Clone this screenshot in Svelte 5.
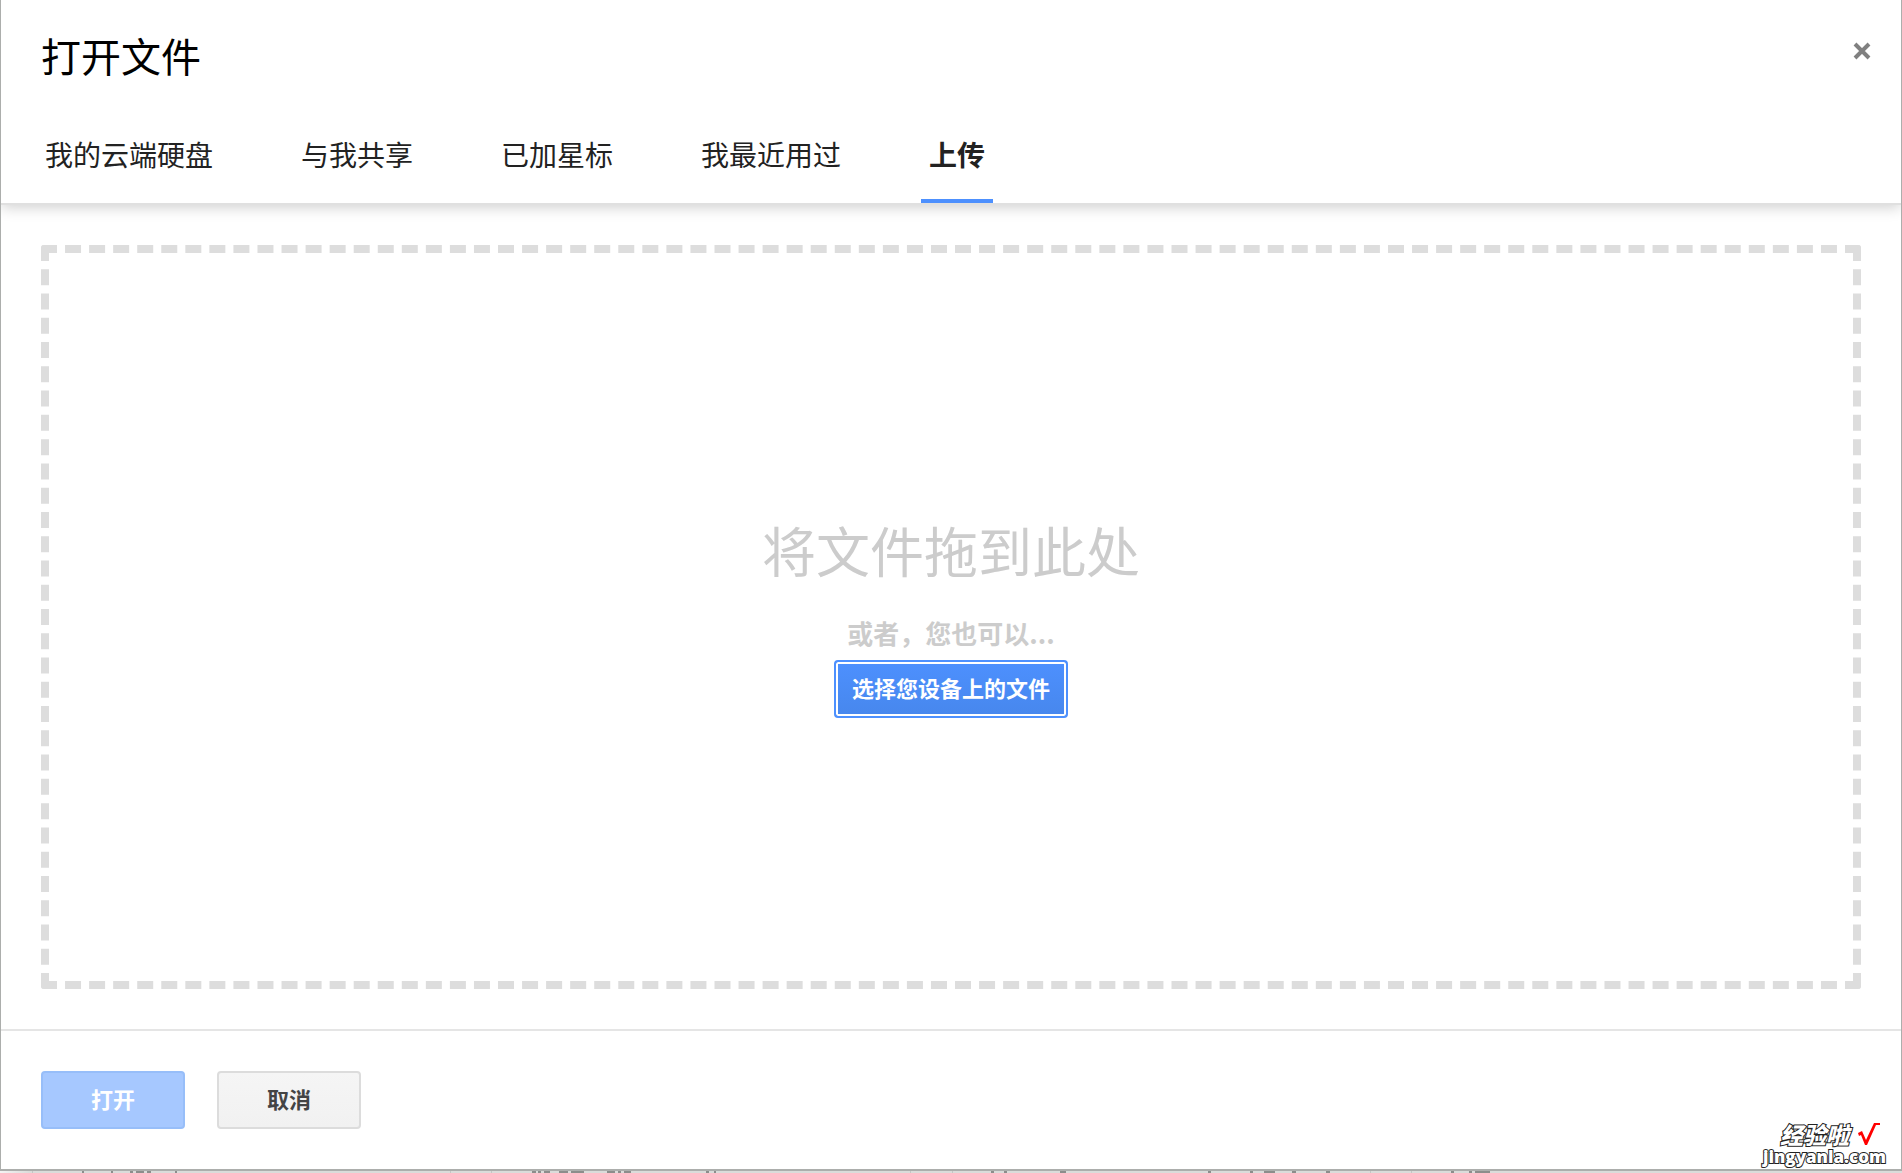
<script lang="ts">
  const tabs = ['我的云端硬盘', '与我共享', '已加星标', '我最近用过', '上传'];

  let active = $state('上传');
  let canOpen = $state(false);
  let picker: HTMLInputElement;

  function handlePick(event: Event) {
    canOpen = !!(event.currentTarget as HTMLInputElement).files?.length;
  }
</script>

<div class="page">
  <div class="dialog" role="dialog" aria-labelledby="dialog-title">
    <header class="dialog-header">
      <div class="title-row">
        <h1 id="dialog-title">打开文件</h1>
        <button class="close" aria-label="关闭">
          <svg width="18" height="18" viewBox="0 0 18 18" fill="none" stroke="currentColor" stroke-width="4"><path d="M2 2l14 14M16 2L2 16" /></svg>
        </button>
      </div>
      <div class="tabs" role="tablist">
        {#each tabs as tab}
          <button class="tab" class:active={tab === active} role="tab" aria-selected={tab === active} onclick={() => (active = tab)}>{tab}</button>
        {/each}
      </div>
    </header>

    <main class="dialog-body">
      <div class="dropzone">
        <p class="drop-title">将文件拖到此处</p>
        <p class="drop-or">或者，您也可以...</p>
        <button class="btn primary" onclick={() => picker.click()}>选择您设备上的文件</button>
        <input bind:this={picker} type="file" aria-label="选择文件" hidden onchange={handlePick} />
      </div>
    </main>

    <footer class="dialog-footer">
      <button class="btn open" disabled={!canOpen}>打开</button>
      <button class="btn cancel">取消</button>
    </footer>
  </div>

  <!-- sliver of the sheet behind the dialog -->
  <div class="backdrop">
    <svg width="1902" height="2" aria-hidden="true">
      <path d="M32 1h1M450 1h1M491 1h1M910 1h1M952 1h1M1370 1h1M1411 1h1" stroke="#c4c6c4" stroke-width="2" />
      <path d="M82 1h2M111 1h2M130 1h3M136 1h8M147 1h4M175 1h2M532 1h4M538 1h3M544 1h6M559 1h9M571 1h13M607 1h8M618 1h3M624 1h7M706 1h3M714 1h2M991 1h3M1004 1h3M1060 1h6M1208 1h3M1250 1h3M1264 1h11M1292 1h4M1326 1h4M1451 1h3M1469 1h3M1475 1h15" stroke="#8c8e8c" stroke-width="2" />
    </svg>
  </div>

  <div class="watermark">
    <div class="mark-top">
      <span>经验啦</span>
      <svg width="24" height="24" viewBox="0 0 24 24" aria-hidden="true"><path d="M1 11l4-2 4 9L17 1h6v2h-4L10 23H8L4 13l-2 1z" fill="#f00" /></svg>
    </div>
    <span class="mark-site">jingyanla.com</span>
  </div>
</div>

<style>
  :global(body) {
    margin: 0;
    font-family: "Noto Sans CJK SC", sans-serif;
  }

  .page {
    position: relative;
    display: flex;
    flex-direction: column;
    min-height: 100vh;
    overflow: hidden;
  }

  .dialog {
    flex: 1;
    display: flex;
    flex-direction: column;
    background: #fff;
    border: solid #acaeac;
    border-width: 0 1px 2px;
  }

  .dialog-header {
    padding-top: 26px;
    border-bottom: 2px solid #e0e0e0;
    box-shadow: 0 2px 14px rgba(0, 0, 0, 0.2);
    clip-path: inset(0 0 -20px 0);
  }

  .title-row {
    display: flex;
    justify-content: space-between;
    align-items: flex-start;
    padding: 0 24px 0 40px;
    margin-bottom: 27px;
  }

  h1 {
    margin: 0;
    font-size: 40px;
    font-weight: 400;
    line-height: 58px;
    color: #000;
  }

  button {
    font-family: inherit;
    cursor: pointer;
  }

  .close {
    display: flex;
    padding: 16px 6px;
    background: none;
    border: none;
    color: #808080;
  }

  .tabs {
    display: flex;
    gap: 72px;
    padding: 0 36px;
  }

  .tab {
    padding: 23px 8px 25px;
    background: none;
    border: none;
    border-bottom: 4px solid transparent;
    font-size: 28px;
    line-height: 40px;
    color: #222;
    white-space: nowrap;
  }

  .tab.active {
    border-bottom-color: #4d90fe;
    font-weight: 700;
  }

  .dialog-body {
    flex: 1;
    display: flex;
    padding: 40px;
  }

  .dropzone {
    flex: 1;
    display: flex;
    flex-direction: column;
    align-items: center;
    justify-content: center;
    border: 8px dashed #ddd;
    border-radius: 3px;
  }

  .drop-title {
    margin: 0 0 24px;
    font-size: 54px;
    line-height: 68px;
    color: #ccc;
  }

  .drop-or {
    margin: 0 0 2px;
    font-size: 26px;
    font-weight: 700;
    line-height: 50px;
    color: #ccc;
  }

  .btn {
    box-sizing: border-box;
    min-width: 144px;
    height: 58px;
    padding: 0 16px 4px;
    border: 2px solid;
    border-radius: 4px;
    font-size: 22px;
    font-weight: 700;
    line-height: 50px;
  }

  .btn.primary {
    background: linear-gradient(#4d90fe, #4787ed);
    border-color: #4d90fe;
    box-shadow: inset 0 0 0 2px #fff;
    color: #fff;
  }

  .btn.open {
    background: #a6c8ff;
    border-color: #97bef9;
    color: #fff;
  }

  .btn.cancel {
    background: linear-gradient(#f5f5f5, #f1f1f1);
    border-color: #dcdcdc;
    color: #444;
  }

  .dialog-footer {
    display: flex;
    gap: 32px;
    padding: 40px;
    border-top: 2px solid #e5e5e5;
  }

  .backdrop {
    height: 2px;
    overflow: hidden;
    background: linear-gradient(to right, #f4f4f4, #dadcda 30px);
  }

  .backdrop svg {
    display: block;
  }

  .watermark {
    position: absolute;
    right: 16px;
    bottom: 7px;
    display: flex;
    flex-direction: column;
    align-items: flex-end;
    gap: 2px;
    color: #fff;
    font-weight: 900;
    -webkit-text-stroke: 2px #222;
    paint-order: stroke fill;
  }

  .mark-top {
    display: flex;
    align-items: center;
    gap: 8px;
    padding-right: 5px;
    font-size: 23px;
    font-style: italic;
    line-height: 22px;
  }

  .mark-site {
    font-family: "Open Sans", sans-serif;
    font-size: 17px;
    font-weight: 800;
    line-height: 18px;
  }
</style>
